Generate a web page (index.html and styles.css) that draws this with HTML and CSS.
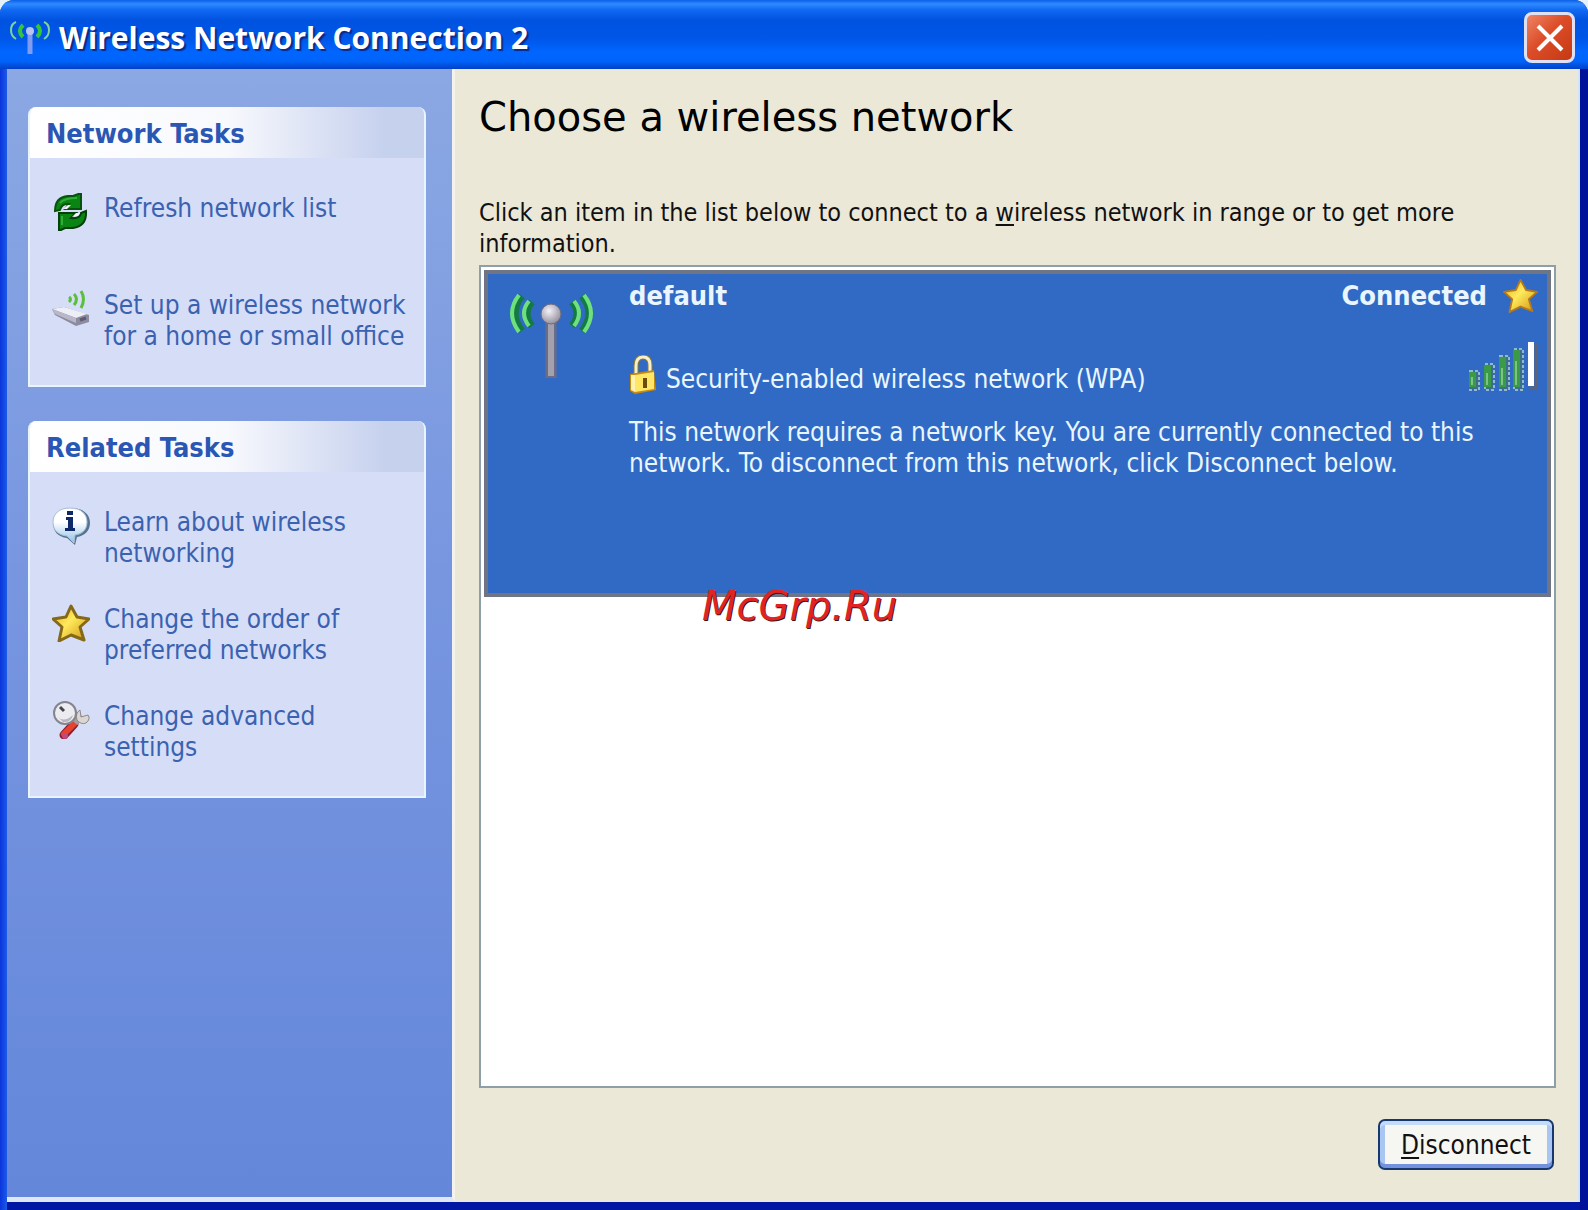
FILE: index.html
```html
<!doctype html>
<html lang="en">
<head>
  <meta charset="UTF-8"/>
  <meta name="viewport" content="width=device-width, initial-scale=1.0"/>
  <title>Wireless Network Connection 2</title>
  <link rel="stylesheet" href="styles.css">
</head>
<body>
  <div class="window">
    <header class="titlebar">
      <svg class="titlebar-icon" viewBox="0 0 40 34" fill="none" aria-hidden="true">
        <path d="M6 1Q1 3 1 9Q1 15 6 18M34 1Q39 3 39 9Q39 15 34 18" stroke="#7fd39a" stroke-width="2"/>
        <path d="M13 4Q7 10 13 16M27 4Q33 10 27 16" stroke="#35c43a" stroke-width="4"/>
        <path d="M20 11V33" stroke="#7f9cf0" stroke-width="5"/>
        <circle cx="20" cy="10" r="4" fill="#b9c2f0"/>
      </svg>
      <h1 class="titlebar-text">Wireless Network Connection 2</h1>
      <button class="close-btn" type="button" aria-label="Close">
        <svg viewBox="0 0 28 28" aria-hidden="true">
          <path d="M2 2L26 26M26 2L2 26" stroke="#fff" stroke-width="4"/>
        </svg>
      </button>
    </header>

    <div class="window-body">
      <aside class="sidebar">
        <nav class="panel">
          <h2>Network Tasks</h2>
          <ul class="tasks">
            <li>
              <a href="#refresh">
                <svg class="task-icon" viewBox="0 0 38 38" aria-hidden="true">
                  <path d="M3 18Q3 4 16 3H21L29 0V16H13L17 11Q10 10 8 17Z" fill="#0a8412" stroke="#06540c" stroke-width="2"/>
                  <path d="M34 18Q35 33 21 35H13L7 38V20H24L19 25Q28 26 29 20Z" fill="#0a8412" stroke="#03400a" stroke-width="2"/>
                  <path d="M10 17L16 12H19L15 16H12ZM20 24L24 20H28L26 23Z" fill="#f2f4fc"/>
                  <path d="M8 10Q12 5 25 5M10 23V32" stroke="#2fae38" stroke-width="2" fill="none"/>
                </svg>
                <span>Refresh network list</span>
              </a>
            </li>
            <li>
              <a href="#setup">
                <svg class="task-icon" viewBox="0 0 38 38" fill="none" aria-hidden="true">
                  <path d="M17 7Q20 9 17 12M22 4Q27 9 22 15M29 1Q34 9 29 18" stroke="#5bbf3c" stroke-width="3"/>
                  <path d="M0 19L12 17L37 25V32L24 36L3 25Z" fill="#8d8b9f"/>
                  <path d="M0 19L12 17L35 24L24 28Z" fill="#eeeef6"/>
                  <path d="M0 19L24 28V33L3 24Z" fill="#b9b8c9"/>
                  <path d="M28 30L34 28" stroke="#5d5a72" stroke-width="3"/>
                </svg>
                <span>Set up a wireless network for a home or small office</span>
              </a>
            </li>
          </ul>
        </nav>

        <nav class="panel">
          <h2>Related Tasks</h2>
          <ul class="tasks">
            <li>
              <a href="#learn">
                <svg class="task-icon" viewBox="0 0 38 38" aria-hidden="true">
                  <defs>
                    <linearGradient id="bubble" x1="0" y1="0" x2="0" y2="1">
                      <stop offset="0.4" stop-color="#fff"/>
                      <stop offset="1" stop-color="#8fc0e6"/>
                    </linearGradient>
                  </defs>
                  <path d="M19 1C31 1 38 7 38 16C38 24 32 29 25 30L23 38L15 31C6 30 1 24 1 16C1 7 8 1 19 1Z" fill="#56748f"/>
                  <path d="M18 1C29 1 35 7 35 15C35 23 30 27 23 28L22 36L15 29C6 28 1 23 1 15C1 7 7 1 18 1Z" fill="url(#bubble)" stroke="#a9bfd6"/>
                  <path d="M15 4H21V8H15ZM14 10H21V21H23V24H13V21H16V13H14Z" fill="#0f2868"/>
                </svg>
                <span>Learn about wireless networking</span>
              </a>
            </li>
            <li>
              <a href="#order">
                <svg class="task-icon" viewBox="0 0 38 38" aria-hidden="true">
                  <defs>
                    <linearGradient id="gold" x1="0" y1="0" x2="1" y2="1">
                      <stop offset="0" stop-color="#e2a818"/>
                      <stop offset="0.45" stop-color="#ffea5c"/>
                      <stop offset="1" stop-color="#cf8f0c"/>
                    </linearGradient>
                  </defs>
                  <path d="M19 2L25 13L37 15L28 23L32 36L19 31L7 37L10 23L1 15L14 13Z" fill="url(#gold)" stroke="#85691a" stroke-width="3" stroke-linejoin="round"/>
                </svg>
                <span>Change the order of preferred networks</span>
              </a>
            </li>
            <li>
              <a href="#advanced">
                <svg class="task-icon" viewBox="0 0 38 38" fill="none" aria-hidden="true">
                  <path d="M22 23L12 34" stroke="#8f1f2e" stroke-width="9" stroke-linecap="round"/>
                  <path d="M24 21L12 33" stroke="#e5432f" stroke-width="6" stroke-linecap="round"/>
                  <circle cx="13" cy="35" r="3" fill="#c04a80"/>
                  <path d="M23 22L30 15" stroke="#a39c9c" stroke-width="6"/>
                  <path d="M28 9L29 16L36 14Q39 18 34 22Q29 24 25 19Q23 12 28 9Z" fill="#d9d6d3" stroke="#8e8985"/>
                  <circle cx="13" cy="12" r="11" fill="#ececf0" stroke="#85858f" stroke-width="2"/>
                  <path d="M6 16Q12 22 21 14Q19 22 11 21Z" fill="#b7b6c1"/>
                  <path d="M8 6L12 10" stroke="#44444d" stroke-width="3"/>
                </svg>
                <span>Change advanced settings</span>
              </a>
            </li>
          </ul>
        </nav>
      </aside>

      <main class="content">
        <h2 class="heading">Choose a wireless network</h2>
        <p class="intro">Click an item in the list below to connect to a <u>w</u>ireless network in range or to get more information.</p>

        <ul class="network-list">
          <li class="network">
            <svg class="antenna" viewBox="0 0 90 88" fill="none" aria-hidden="true">
              <defs>
                <radialGradient id="knob" cx="0.4" cy="0.35" r="0.7">
                  <stop offset="0" stop-color="#f4f2f8"/>
                  <stop offset="1" stop-color="#8e8a98"/>
                </radialGradient>
              </defs>
              <path d="M15 4Q1 21 15 39M75 4Q89 21 75 39" stroke="#147a45" stroke-width="7"/>
              <path d="M25 10Q15 21 25 34M65 10Q75 21 65 34" stroke="#147a45" stroke-width="7"/>
              <path d="M12 3Q-2 21 12 40M77 3Q91 21 77 40" stroke="#6ee07c" stroke-width="4"/>
              <path d="M22 9Q12 21 22 34M67 9Q77 21 67 34" stroke="#6ee07c" stroke-width="4"/>
              <path d="M44 24V86" stroke="#6c6c86" stroke-width="11"/>
              <path d="M44 24V84" stroke="#a3a1ae" stroke-width="6"/>
              <circle cx="44" cy="22" r="10" fill="url(#knob)" stroke="#6f6c80"/>
            </svg>
            <div class="network-info">
              <div class="network-row">
                <strong>default</strong>
                <span class="status">
                  <strong>Connected</strong>
                  <svg class="star" viewBox="0 0 38 38" aria-hidden="true">
                    <path d="M19 2L25 13L37 15L28 23L32 36L19 31L7 37L10 23L1 15L14 13Z" fill="url(#gold)" stroke="#b5791c" stroke-width="2" stroke-linejoin="round"/>
                  </svg>
                </span>
              </div>
              <div class="network-row security">
                <span class="security-label">
                  <svg class="lock" viewBox="0 0 28 40" fill="none" aria-hidden="true">
                    <path d="M7 21V11Q7 2 14 2Q21 2 21 10V18" stroke="#8a7a3a" stroke-width="5"/>
                    <path d="M7 20V11Q7 2 14 2Q21 2 21 10V18" stroke="#f3efcf" stroke-width="3"/>
                    <path d="M1 19L25 15L27 35L6 39L1 36Z" fill="#c48a14"/>
                    <path d="M6 20L25 17V34L6 37Z" fill="#ffe765"/>
                    <path d="M2 20L6 20V37L2 35Z" fill="#fff3ae"/>
                    <path d="M16 23V33" stroke="#6b4e0c" stroke-width="4"/>
                  </svg>
                  Security-enabled wireless network (WPA)
                </span>
                <svg class="signal" viewBox="0 0 70 50" role="img" aria-label="Signal strength: very good">
                  <path d="M2 30H11V49H2ZM17 23H26V49H17ZM32 15H41V49H32ZM46 8H55V49H46Z" fill="#3b6f8c" stroke="#94b9cf" stroke-width="2" stroke-dasharray="3 2"/>
                  <path d="M1 31H8V46H1ZM16 24H23V46H16ZM31 16H38V46H31ZM45 9H52V46H45Z" fill="#3a9a48"/>
                  <path d="M4 36V44M19 32V44M34 27V44M48 20V44" stroke="#7cc486" stroke-width="2"/>
                  <path d="M68 2V47H61" fill="none" stroke="#5d6478" stroke-width="3"/>
                  <path d="M60 1H66V45H60Z" fill="#fff"/>
                </svg>
              </div>
              <p>This network requires a network key. You are currently connected to this network. To disconnect from this network, click Disconnect below.</p>
            </div>
          </li>
        </ul>

        <div class="actions">
          <button class="btn" type="button"><u>D</u>isconnect</button>
        </div>
      </main>
    </div>

    <div class="watermark">McGrp.Ru</div>
  </div>
</body>
</html>
```
FILE: styles.css
```css
* {
  box-sizing: border-box;
}

body {
  margin: 0;
  background: #e4f1f8;
  font-family: Tahoma, "DejaVu Sans Condensed", "DejaVu Sans", sans-serif;
  font-size: 26px;
  line-height: 31px;
  color: #111;
}

h1, h2, p, ul {
  margin: 0;
  padding: 0;
}

ul {
  list-style: none;
}

strong {
  font-size: 27px;
}

u {
  text-decoration-thickness: 2px;
  text-underline-offset: 3px;
}

.window {
  position: relative;
  display: flex;
  flex-direction: column;
  min-height: 100vh;
  background: linear-gradient(to right, #0a35dd 0, #1b5be8 7px, #0a2ac0 50%, #00119a 100%);
  border-radius: 14px 14px 0 0;
  overflow: hidden;
}

/* title bar */
.titlebar {
  display: flex;
  align-items: center;
  gap: 9px;
  height: 69px;
  padding: 6px 13px 0 10px;
  background: linear-gradient(to bottom, #0b5fe8 0, #2f8bff 4px, #1168f2 10px, #0053e0 20px, #0056e8 38px, #0066ff 52px, #0064fb 61px, #0040c8 69px);
}

.titlebar-icon {
  width: 40px;
  height: 34px;
}

.titlebar-text {
  flex: 1;
  font-family: "Trebuchet MS", "Open Sans", sans-serif;
  font-size: 30px;
  font-weight: bold;
  color: #fff;
  text-shadow: 2px 2px 1px #0a2a8c;
}

.close-btn {
  display: flex;
  align-items: center;
  justify-content: center;
  width: 51px;
  height: 51px;
  padding: 0;
  border: 3px solid #dfe0f4;
  border-radius: 8px;
  background: linear-gradient(135deg, #ee8566 0, #dc4c28 45%, #c43a12 100%);
  cursor: pointer;
}

.close-btn svg {
  width: 28px;
  height: 28px;
}

.window-body {
  flex: 1;
  display: flex;
  margin: 0 8px 0 7px;
  border-bottom: 8px solid #0017a4;
  background: #ebe8d7;
}

/* left pane */
.sidebar {
  display: flex;
  flex-direction: column;
  flex: none;
  gap: 34px;
  width: 448px;
  padding: 38px 26px 0 21px;
  border-right: 3px solid #f3f2ec;
  border-bottom: 5px solid #dfe6f6;
  background: linear-gradient(to bottom, #8ba8e3 0, #7896e0 45%, #6487da 100%);
}

.panel {
  border: 2px solid #e9f5fd;
  border-top: 0;
  border-radius: 8px 8px 0 0;
  background: #d6ddf7;
  overflow: hidden;
}

.panel h2 {
  padding: 11px 16px 9px;
  background: linear-gradient(to right, #fff 0, #f8f9fd 50%, #c6d1ee 90%);
  font-size: 27px;
  line-height: 31px;
  color: #2b57b4;
}

.tasks {
  display: flex;
  flex-direction: column;
  gap: 35px;
  padding: 35px 16px 33px 22px;
}

.tasks li {
  min-height: 62px;
}

.tasks a {
  display: flex;
  gap: 14px;
  color: #3a62b0;
  text-decoration: none;
}

.tasks a:hover {
  text-decoration: underline;
}

.task-icon {
  flex: none;
  width: 38px;
  height: 38px;
}

/* right pane */
.content {
  flex: 1;
  display: flex;
  flex-direction: column;
  padding: 23px 22px 32px 24px;
  border-right: 2px solid #d3e4fa;
}

.heading {
  margin-bottom: 55px;
  font-family: Tahoma, "DejaVu Sans", sans-serif;
  font-size: 40px;
  line-height: 50px;
  font-weight: normal;
  color: #000;
}

.intro {
  margin-bottom: 6px;
  font-size: 25px;
}

.network-list {
  flex: 1;
  padding: 3px;
  border: 2px solid #8d9fa8;
  background: #fff;
}

.network {
  display: flex;
  gap: 32px;
  min-height: 327px;
  padding: 4px 9px 8px 19px;
  border: 4px solid #6f7585;
  background: #316ac5;
  color: #e9f6ff;
}

.antenna {
  flex: none;
  width: 90px;
  height: 88px;
  margin-top: 14px;
}

.network-info {
  flex: 1;
}

.network-row {
  display: flex;
  align-items: center;
  justify-content: space-between;
}

.status {
  display: flex;
  align-items: center;
  gap: 16px;
}

.star {
  width: 35px;
  height: 35px;
}

.security {
  height: 68px;
  margin: 28px 0 8px;
}

.security-label {
  display: flex;
  align-items: flex-end;
  gap: 9px;
}

.lock {
  width: 28px;
  height: 40px;
}

.signal {
  align-self: flex-start;
  width: 70px;
  height: 50px;
}

.actions {
  display: flex;
  justify-content: flex-end;
  margin-top: 31px;
  padding-right: 2px;
}

.btn {
  padding: 9px 21px 7px;
  border: 2px solid #16386f;
  border-radius: 7px;
  background: #f6f6f3;
  box-shadow: inset 0 4px 0 #c3daf8, inset 0 -4px 0 #7391dc, inset 5px 0 0 #a9c5f2, inset -5px 0 0 #a9c5f2;
  font-family: inherit;
  font-size: 26px;
  line-height: 31px;
  color: #111;
  cursor: pointer;
}

/* site mark laid over the window */
.watermark {
  position: absolute;
  top: 583px;
  left: 702px;
  font-family: "DejaVu Sans", sans-serif;
  font-size: 40px;
  line-height: 46px;
  font-style: italic;
  color: #e02424;
  text-shadow: 1px 1px 0 #3a1616;
  pointer-events: none;
}
```
